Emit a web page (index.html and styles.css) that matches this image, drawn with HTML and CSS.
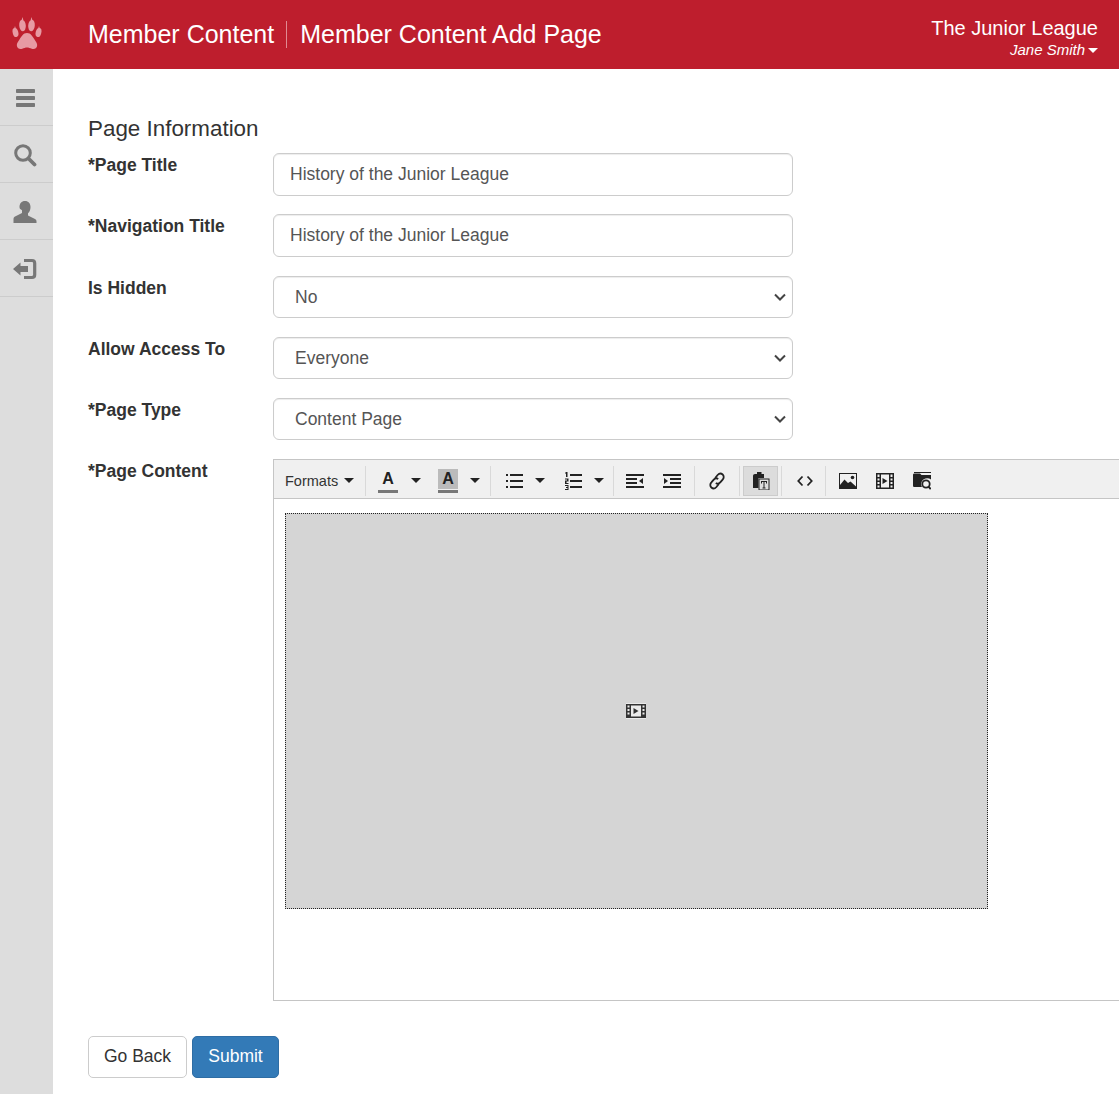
FILE: index.html
```html
<!DOCTYPE html>
<html lang="en">
<head>
<meta charset="utf-8">
<title>Member Content Add Page</title>
<link rel="stylesheet" href="styles.css">
</head>
<body>
<header class="topbar">
  <div class="logo">
    <svg width="32" height="38" viewBox="0 0 32 36"><g fill="#e79aa3">
      <ellipse cx="4.5" cy="15.5" rx="2.8" ry="4.6" transform="rotate(-14 4.500 15.500)"/>
      <ellipse cx="11.5" cy="8.500" rx="3.300" ry="5.800" transform="rotate(-5 11.500 8.500)"/>
      <ellipse cx="20.500" cy="8.500" rx="3.300" ry="5.800" transform="rotate(5 20.500 8.500)"/>
      <ellipse cx="27.500" cy="15.500" rx="2.800" ry="4.600" transform="rotate(14 27.500 15.500)"/>
      <path d="M16 16c4 0 5.500 3.500 7.500 6.500 1.600 2.400 3 4.200 2.600 6.500-.5 2.600-3 3.500-5.300 2.700-1.800-.6-3.200-1.300-4.800-1.300s-3 .7-4.800 1.300c-2.300.8-4.800-.1-5.300-2.700-.4-2.300 1-4.100 2.600-6.500C10.500 19.500 12 16 16 16z"/>
      <path d="M11.500 0l.8 3h-1.600zM20.500 0l.8 3h-1.600zM4 9l.8 2.500h-1.600zM28 9l.8 2.500h-1.600z"/>
    </g></svg>
  </div>
  <div class="crumbs">
    <span class="crumb">Member Content</span>
    <span class="crumb crumb-sep">Member Content Add Page</span>
  </div>
  <div class="account">
    <div class="org">The Junior League</div>
    <div class="user">Jane Smith<i class="caret caret-white"></i></div>
  </div>
</header>

<div class="shell">
  <nav class="side">
    <a class="side-item"><svg width="22" height="20" viewBox="0 0 22 20"><g fill="#777"><rect x="2" y="1" width="19" height="4" rx=".8"/><rect x="2" y="8" width="19" height="4" rx=".8"/><rect x="2" y="15" width="19" height="4" rx=".8"/></g></svg></a>
    <a class="side-item"><svg width="24" height="24" viewBox="0 0 24 24"><circle cx="10" cy="10" r="7.300" fill="none" stroke="#777" stroke-width="3"/><path d="M15.500 15.500l6 6" stroke="#777" stroke-width="3.800" stroke-linecap="round"/></svg></a>
    <a class="side-item"><svg width="24" height="24" viewBox="0 0 24 24"><path fill="#777" d="M12 1c3.500 0 5.500 2.600 5.500 6 0 2.600-1 5-2.500 6.300v2.200l7 3.500c1 .5 1.500 1.200 1.500 2.500v1.500H.5V19c0-1.300.5-2 1.500-2.500l7-3.500v-2.700C7.500 9 6.500 9 6.500 7c0-3.400 2-6 5.500-6z"/></svg></a>
    <a class="side-item"><svg width="24" height="22" viewBox="0 0 24 22"><path fill="#777" d="M0 11l7.500-6.500V8H15v6H7.500v3.500z"/><path fill="none" stroke="#777" stroke-width="3.200" d="M11 2.500h8c1.700 0 2.700 1 2.700 2.700v11.600c0 1.700-1 2.700-2.700 2.700h-8"/></svg></a>
  </nav>

  <main class="content">
    <h1 class="section-title">Page Information</h1>
    <form class="form">
      <div class="row">
        <label class="label">*Page Title</label>
        <input class="control" type="text" value="History of the Junior League">
      </div>
      <div class="row row-wide">
        <label class="label">*Navigation Title</label>
        <input class="control" type="text" value="History of the Junior League">
      </div>
      <div class="row">
        <label class="label">Is Hidden</label>
        <select class="control select"><option>No</option></select>
      </div>
      <div class="row">
        <label class="label">Allow Access To</label>
        <select class="control select"><option>Everyone</option></select>
      </div>
      <div class="row">
        <label class="label">*Page Type</label>
        <select class="control select"><option>Content Page</option></select>
      </div>
      <div class="row row-editor">
        <label class="label">*Page Content</label>
        <div class="editor">
          <div class="toolbar">
            <span class="tool tool-formats">Formats<i class="caret"></i></span>
            <span class="divider ml-11"></span>
            <span class="tool tool-color ml-12"><span class="letter">A</span><span class="bar"></span></span>
            <span class="tool tool-caret ml-13"><i class="caret"></i></span>
            <span class="tool tool-color ml-17"><span class="letter letter-hl">A</span><span class="bar"></span></span>
            <span class="tool tool-caret ml-12"><i class="caret"></i></span>
            <span class="divider ml-10"></span>
            <span class="tool tool-icon ml-14"><svg width="18" height="16" viewBox="0 0 18 16"><g fill="#222"><rect x="5" y="1" width="13" height="2"/><rect x="5" y="7" width="13" height="2"/><rect x="5" y="13" width="13" height="2"/><rect x="1" y="1" width="2" height="2"/><rect x="1" y="7" width="2" height="2"/><rect x="1" y="13" width="2" height="2"/></g></svg></span>
            <span class="tool tool-caret ml-12"><i class="caret"></i></span>
            <span class="tool tool-icon ml-19"><svg width="18" height="18" viewBox="0 0 18 18"><g fill="#222"><rect x="6" y="2" width="12" height="2"/><rect x="6" y="8" width="12" height="2"/><rect x="6" y="14" width="12" height="2"/><path d="M2 0h1.500v5H2V1.500H1V1zM1 6.500h3.500v3H2.500V11h2v1H1V8.500h2v-1H1zM1 13h3.500v5H1v-1h2.500v-1H2v-1h1.500v-1H1z"/></g></svg></span>
            <span class="tool tool-caret ml-12"><i class="caret"></i></span>
            <span class="divider ml-9"></span>
            <span class="tool tool-icon ml-12"><svg width="18" height="16" viewBox="0 0 18 16"><g fill="#222"><rect y="1" width="18" height="2"/><rect y="5" width="11" height="2"/><rect y="9" width="11" height="2"/><rect y="13" width="18" height="2"/><path d="M17 5v6l-4-3z"/></g></svg></span>
            <span class="tool tool-icon ml-19"><svg width="18" height="16" viewBox="0 0 18 16"><g fill="#222"><rect y="1" width="18" height="2"/><rect x="7" y="5" width="11" height="2"/><rect x="7" y="9" width="11" height="2"/><rect y="13" width="18" height="2"/><path d="M1 5v6l4-3z"/></g></svg></span>
            <span class="divider ml-13"></span>
            <span class="tool tool-icon ml-13"><svg width="18" height="18" viewBox="1.500 1.500 15 15"><g fill="none" stroke="#222" stroke-width="1.500"><path d="M7.500 6.500l2-2.500c1.200-1.300 3-1.500 4.200-.4s1.200 3 0 4.300l-2 2.300c-1 1.100-2.500 1.300-3.700.5"/><path d="M10.500 11.500l-2 2.500c-1.200 1.300-3 1.500-4.200.4s-1.200-3 0-4.300l2-2.300c1-1.100 2.500-1.300 3.700-.5"/></g></svg></span>
            <span class="divider ml-13"></span>
            <span class="tool tool-icon tool-active ml-3"><svg width="18" height="18" viewBox="0 0 18 18"><path fill="#222" d="M5 0h4.500v2H12v4H6.500v10H1V4c0-1.200.8-2 2-2h2z"/><rect x="7" y="7" width="10" height="11" fill="#ddd" stroke="#222"/><path fill="#222" d="M9 9h6v2.500h-1V10h-1.500v5.500h1v1h-3v-1h1V10H10v1.500H9z"/></svg></span>
            <span class="divider ml-3"></span>
            <span class="tool tool-icon ml-14"><svg width="16" height="16" viewBox="0 0 16 16"><path fill="none" stroke="#222" stroke-width="1.800" d="M5.500 3.500L1.300 8l4.200 4.500M10.500 3.500L14.700 8l-4.200 4.500"/></svg></span>
            <span class="divider ml-11"></span>
            <span class="tool tool-icon ml-13"><svg width="18" height="16" viewBox="0 0 18 16"><rect x=".5" y=".5" width="17" height="15" fill="none" stroke="#222"/><path fill="#222" d="M1 15V12l4.500-5.500 3.500 3.500 2.500-1.500L17 13.500V15z"/><circle cx="13.500" cy="4.500" r="1.800" fill="#222"/></svg></span>
            <span class="tool tool-icon ml-19"><svg width="18" height="16" viewBox="0 0 18 16"><path fill="#222" fill-rule="evenodd" d="M0 0h18v16H0zM1.500 1.500v2.500h2V1.500zM14.500 1.500v2.500h2V1.500zM1.500 5.500v2h2v-2zM14.500 5.500v2h2v-2zM1.500 9v2h2V9zM14.500 9v2h2V9zM1.500 12.500v2h2v-2zM14.500 12.500v2h2v-2zM5 1.500v13h8v-13z"/><path fill="#222" d="M6.500 5l5 3-5 3z"/></svg></span>
            <span class="tool tool-icon ml-19"><svg width="18" height="18" viewBox="0 0 18 18"><path fill="#222" d="M0 3c0-1 .5-1.500 1.500-1.500H7L8.500 3H18v4.500c-2-1.500-5-1.700-7.200-.2-2.600 1.700-3.300 5.100-1.800 7.700H1.500C.5 15 0 14.500 0 13.500z"/><rect x="1" y="0" width="17" height="1" fill="#222"/><circle cx="13" cy="12" r="3.700" fill="none" stroke="#222" stroke-width="1.800"/><path d="M15.500 14.700l2.200 2.500" stroke="#222" stroke-width="2"/></svg></span>
          </div>
          <div class="editor-body">
            <div class="video-placeholder">
              <svg class="video-glyph" width="20" height="16" viewBox="0 0 20 16"><rect width="20" height="16" fill="#fff" opacity=".5"/><path fill="#333" fill-rule="evenodd" d="M0 1h20v14H0zM1.500 2.500v2h2v-2zM16.500 2.500v2h2v-2zM1.500 6v2h2V6zM16.500 6v2h2V6zM1.500 9.500v2h2v-2zM16.500 9.500v2h2v-2zM5 2.500v11h10v-11z"/><path fill="#333" d="M7.500 5l5 3-5 3z"/></svg>
            </div>
          </div>
        </div>
      </div>
      <div class="actions">
        <button class="btn btn-default" type="button">Go Back</button>
        <button class="btn btn-primary" type="button">Submit</button>
      </div>
    </form>
  </main>
</div>
</body>
</html>
```

FILE: styles.css
```css
* { box-sizing: border-box; }
html, body { margin: 0; height: 100%; overflow: hidden; }
body { font-family: "Liberation Sans", Arial, sans-serif; color: #333; background: #fff; }

.topbar { height: 69px; background: #be1e2d; color: #fff; display: flex; align-items: center; }
.logo { width: 53px; flex: none; display: flex; justify-content: center; align-items: center; }
.logo svg { display: block; margin-left: 1px; }
.crumbs { margin-left: 35px; display: flex; align-items: center; flex: 1; }
.crumb { font-size: 25px; line-height: 27px; }
.crumb-sep { margin-left: 12px; padding-left: 13px; border-left: 1px solid #e08a92; }
.account { text-align: right; padding-right: 21px; margin-top: 5px; }
.org { font-size: 20px; line-height: 24px; }
.user { font-size: 15px; line-height: 18px; font-style: italic; margin-top: 1px; }

.caret { display: inline-block; width: 0; height: 0; border-left: 5px solid transparent; border-right: 5px solid transparent; border-top: 5px solid #222; vertical-align: middle; }
.caret-white { border-top-color: #fff; margin-left: 3px; }

.shell { display: flex; height: 1025px; }
.side { width: 53px; flex: none; background: #ddd; }
.side-item { height: 57px; display: flex; align-items: center; justify-content: center; border-bottom: 1px solid #ccc; padding: 2px 3px 0 0; }
.side-item svg { display: block; }

.content { flex: 1; min-width: 0; padding: 47px 0 0 35px; }
.section-title { margin: 0 0 11px; font-size: 22.4px; line-height: 26px; font-weight: 400; color: #333; }

.row { display: grid; grid-template-columns: 185px 520px; margin-bottom: 18px; }
.row-wide { margin-bottom: 19px; }
.label { font-size: 17.5px; line-height: 24px; font-weight: 700; color: #333; }
.control { width: 520px; height: 43px; border: 1px solid #ccc; border-radius: 6px; background: #fff; padding: 0 16px; font: 17.5px "Liberation Sans", Arial, sans-serif; color: #555; box-shadow: inset 0 1px 1px rgba(0,0,0,.075); }
.select { height: 42px; padding: 0 30px 0 21px; margin-bottom: 1px; appearance: none; background: #fff url("data:image/svg+xml,%3Csvg xmlns='http://www.w3.org/2000/svg' width='12' height='8' viewBox='0 0 12 8'%3E%3Cpath fill='none' stroke='%23444' stroke-width='2' d='M1 1.500l5 5 5-5'/%3E%3C/svg%3E") no-repeat right 6px center; }

.row-editor { margin-bottom: 0; }
.editor { width: 860px; height: 542px; border: 1px solid #c5c5c5; background: #fff; }
.toolbar { height: 39px; background: #f0f0f0; border-bottom: 1px solid #c5c5c5; display: flex; align-items: center; padding: 3px 0 0 11px; color: #222; }
.tool { display: flex; align-items: center; justify-content: center; height: 30px; flex: none; }
.tool svg { display: block; }
.tool-formats { width: 69px; justify-content: space-between; font-size: 14.5px; color: #333; }
.tool-color { width: 20px; flex-direction: column; }
.letter { font-size: 16px; font-weight: 700; line-height: 20px; color: #222; width: 20px; text-align: center; }
.letter-hl { background: #bbb; height: 20px; }
.bar { width: 20px; height: 3px; background: #777; margin-top: 1px; }
.tool-caret { width: 10px; }
.tool-icon { width: 18px; }
.tool-active { width: 35px; background: #dcdcdc; border: 1px solid #ccc; }
.divider { width: 1px; height: 30px; background: #d9d9d9; flex: none; }

.ml-3 { margin-left: 3px; }
.ml-9 { margin-left: 9px; }
.ml-10 { margin-left: 10px; }
.ml-11 { margin-left: 11px; }
.ml-12 { margin-left: 12px; }
.ml-13 { margin-left: 13px; }
.ml-14 { margin-left: 14px; }
.ml-17 { margin-left: 17px; }
.ml-19 { margin-left: 19px; }

.editor-body { padding: 14px 0 0 11px; }
.video-placeholder { width: 703px; height: 396px; background: #d5d5d5; border: 1px dotted #222; display: flex; align-items: center; justify-content: center; }
.video-glyph { display: block; margin: 0 2px 1px 0; }

.actions { display: flex; gap: 5px; margin-top: 35px; }
.btn { height: 42px; border-radius: 5px; font: 17.5px "Liberation Sans", Arial, sans-serif; padding: 0 0 2px; border: 1px solid #ccc; white-space: nowrap; }
.btn-default { background: #fff; color: #333; width: 99px; }
.btn-primary { background: #337ab7; border-color: #2e6da4; color: #fff; width: 87px; }
```
